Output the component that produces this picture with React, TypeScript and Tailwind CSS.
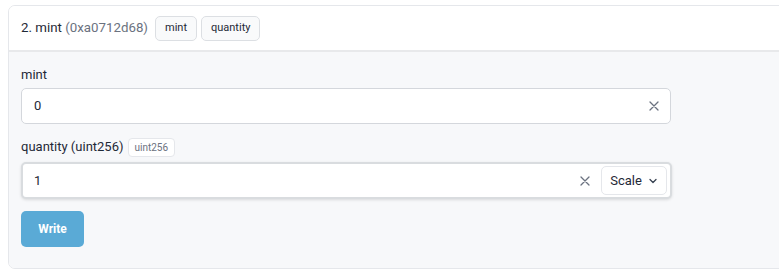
import React from "react";

const XIcon = () => (
  <svg width="12" height="12" viewBox="0 0 12 12" fill="none" stroke="#6b7280" strokeWidth="1.3" strokeLinecap="round">
    <path d="M2 2L10 10M10 2L2 10" />
  </svg>
);

const Chevron = () => (
  <svg width="10" height="10" viewBox="0 0 10 10" fill="none" stroke="#374151" strokeWidth="1.3" strokeLinecap="round" strokeLinejoin="round">
    <path d="M2 3.5L5 6.5L8 3.5" />
  </svg>
);

export default function App() {
  return (
    <div className="w-[779px] h-[270px] bg-white overflow-hidden pt-[5px] pl-[8px]" style={{ fontFamily: "Roboto, 'Liberation Sans', sans-serif" }}>
      <div className="w-[800px] h-[264px] border border-[#e5e7eb] rounded-[7px] overflow-hidden flex flex-col">
        <div className="h-[46px] bg-white border-b-2 border-[#e8e9eb] flex items-center pl-[12px] gap-[7px] shrink-0">
          <span className="text-[13.3px] text-[#1f2937]">
            2. mint <span className="text-[#6b7280]">(0xa0712d68)</span>
          </span>
          <div className="flex gap-[4px]">
            <span className="h-[25px] px-[9px] flex items-center text-[11px] text-[#1f2937] bg-[#f9fafb] border border-[#dcdfe3] rounded-[5px]">mint</span>
            <span className="h-[25px] px-[9px] flex items-center text-[11px] text-[#1f2937] bg-[#f9fafb] border border-[#dcdfe3] rounded-[5px]">quantity</span>
          </div>
        </div>
        <div className="flex-1 bg-[#f7f8fa] pl-[12px] pt-[15px]">
          <div className="text-[13px] text-[#1f2937] leading-[16px]">mint</div>
          <div className="mt-[5px] w-[650px] h-[36px] bg-white border border-[#d4d7dc] rounded-[5px] flex items-center pl-[12px] pr-[10px]">
            <span className="flex-1 text-[13px] text-[#1f2937]">0</span>
            <XIcon />
          </div>
          <div className="mt-[13px] flex items-center gap-[4px] h-[20px]">
            <span className="text-[13px] text-[#1f2937]">quantity (uint256)</span>
            <span className="h-[19px] px-[6px] flex items-center text-[10px] text-[#6b7280] bg-white border border-[#e5e7eb] rounded-[4px]">uint256</span>
          </div>
          <div className="mt-[5px] w-[651px] h-[37px] bg-white border-2 border-[#d9dcdf] rounded-[5px] flex items-center pl-[11px] pr-[3px] shadow-[0_1px_3px_rgba(0,0,0,0.12)]">
            <span className="flex-1 text-[13px] text-[#1f2937]">1</span>
            <XIcon />
            <div className="ml-[10px] h-[29px] w-[66px] border border-[#e5e7eb] rounded-[5px] flex items-center justify-center gap-[6px] text-[13px] text-[#1f2937] bg-white">
              Scale <Chevron />
            </div>
          </div>
          <button className="mt-[12px] w-[63px] h-[36px] rounded-[5px] bg-[#5aaad6] text-white text-[12px] font-bold">Write</button>
        </div>
      </div>
    </div>
  );
}
